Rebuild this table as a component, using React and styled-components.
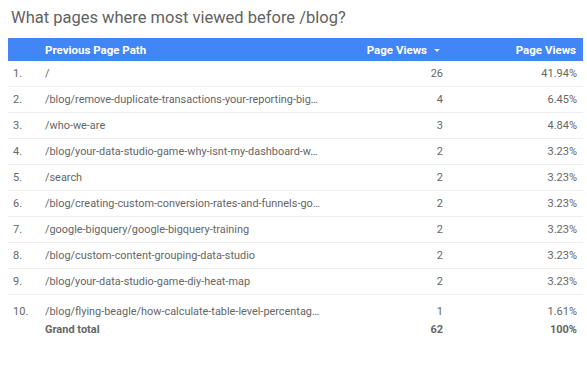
import React from 'react'
import styled, { createGlobalStyle } from 'styled-components'

const GlobalStyle = createGlobalStyle`
  html, body {
    margin: 0;
    padding: 0;
    background: #fff;
  }
  body {
    font-family: Roboto, "Liberation Sans", sans-serif;
  }
`

const Page = styled.div`
  width: 587px;
  height: 365px;
  padding: 0 4px 0 8px;
  box-sizing: border-box;
`

const Title = styled.h1`
  margin: 0;
  height: 38px;
  padding: 0 0 0 3px;
  font-size: 16.5px;
  font-weight: 400;
  line-height: 35px;
  color: #626262;
`

const Table = styled.div`
  width: 575px;
`

const Row = styled.div`
  display: grid;
  grid-template-columns: 37px minmax(0, 1fr) 130px 130px;
  align-items: center;
  height: ${(p) => p.$height}px;
  padding-top: ${(p) => p.$top || 0}px;
  border-bottom: ${(p) => (p.$border ? '1px solid #eeeeee' : 'none')};
  box-sizing: border-box;
  font-size: 11px;
  color: #666;
`

const HeaderRow = styled(Row)`
  background: #4285f4;
  color: #fff;
  font-weight: 700;
  font-size: 11.5px;
`

const Cell = styled.div`
  min-width: 0;
  white-space: nowrap;
  text-align: ${(p) => (p.$right ? 'right' : 'left')};
  padding: ${(p) => p.$pad || '0'};
  font-weight: ${(p) => (p.$bold ? 700 : 'inherit')};
`

const PathCell = styled(Cell)`
  font-size: 10.9px;
`

const SortArrow = styled.span`
  display: inline-block;
  width: 0;
  height: 0;
  margin-left: 7px;
  vertical-align: middle;
  border-left: 3px solid transparent;
  border-right: 3px solid transparent;
  border-top: 3px solid #e3ecfd;
`

const rows = [
  ['/', 26, '41.94%'],
  ['/blog/remove-duplicate-transactions-your-reporting-big…', 4, '6.45%'],
  ['/who-we-are', 3, '4.84%'],
  ['/blog/your-data-studio-game-why-isnt-my-dashboard-w…', 2, '3.23%'],
  ['/search', 2, '3.23%'],
  ['/blog/creating-custom-conversion-rates-and-funnels-go…', 2, '3.23%'],
  ['/google-bigquery/google-bigquery-training', 2, '3.23%'],
  ['/blog/custom-content-grouping-data-studio', 2, '3.23%'],
  ['/blog/your-data-studio-game-diy-heat-map', 2, '3.23%'],
  ['/blog/flying-beagle/how-calculate-table-level-percentag…', 1, '1.61%'],
]

const App = () => {
  return (
    <Page>
      <GlobalStyle />
      <Title>What pages where most viewed before /blog?</Title>
      <Table>
        <HeaderRow $height={23}>
          <Cell />
          <Cell>Previous Page Path</Cell>
          <Cell $right $pad="0 13px 0 0">
            Page Views
            <SortArrow />
          </Cell>
          <Cell $right $pad="0 7px 0 0">Page Views</Cell>
        </HeaderRow>
        {rows.map(([path, views, pct], i) => (
          <Row key={i} $height={26} $top={i === 9 ? 6 : 0} $border={i < 9}>
            <Cell $pad="0 0 0 5px">{i + 1}.</Cell>
            <PathCell>{path}</PathCell>
            <Cell $right $pad="0 10px 0 0">{views}</Cell>
            <Cell $right $pad="0 6px 0 0">{pct}</Cell>
          </Row>
        ))}
        <Row $height={16}>
          <Cell />
          <Cell $bold>Grand total</Cell>
          <Cell $right $bold $pad="0 10px 0 0">62</Cell>
          <Cell $right $bold $pad="0 6px 0 0">100%</Cell>
        </Row>
      </Table>
    </Page>
  )
}

export default App
